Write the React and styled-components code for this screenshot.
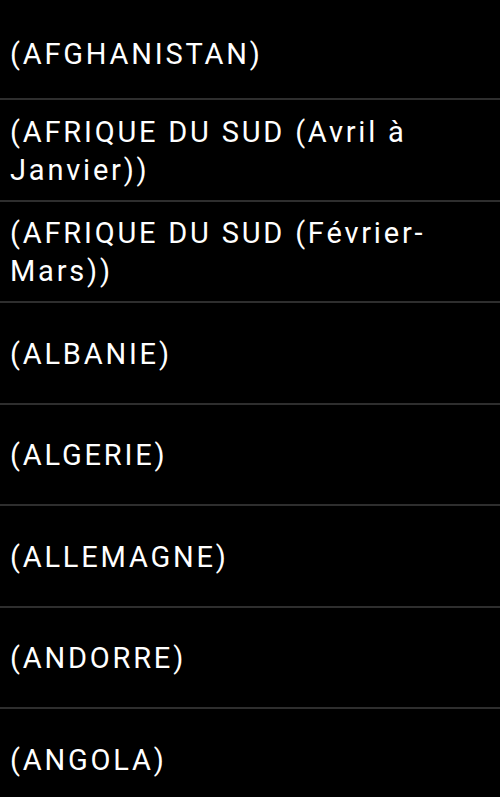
import styled, { createGlobalStyle } from 'styled-components'

const GlobalStyle = createGlobalStyle`
  html, body {
    margin: 0;
    padding: 0;
    background: #000;
  }
  body {
    font-family: Roboto, "Liberation Sans", sans-serif;
  }
`

const countries = [
  '(AFGHANISTAN)',
  '(AFRIQUE DU SUD (Avril à Janvier))',
  '(AFRIQUE DU SUD (Février-Mars))',
  '(ALBANIE)',
  '(ALGERIE)',
  '(ALLEMAGNE)',
  '(ANDORRE)',
  '(ANGOLA)',
]

function App() {
  return (
    <>
      <GlobalStyle />
      <List>
        {countries.map((name) => (
          <Row key={name}>
            <Label>{name}</Label>
          </Row>
        ))}
      </List>
    </>
  )
}

export default App

const List = styled.ul`
  list-style: none;
  margin: 0;
  padding: 0;
  width: 500px;
  height: 797px;
  overflow: hidden;
  background: #000;
`

const Row = styled.li`
  display: flex;
  align-items: center;
  box-sizing: border-box;
  min-height: 101.5px;
  padding: 2px 14px 0 10px;
  border-bottom: 2px solid #2e2e2e;

  &:first-child {
    min-height: 100px;
    padding-top: 10px;
  }
`

const Label = styled.span`
  color: #fff;
  font-size: 29px;
  line-height: 38px;
  letter-spacing: 2.8px;
  font-weight: 400;
`
